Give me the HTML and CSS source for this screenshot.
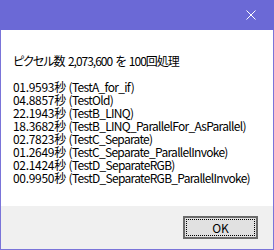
FILE: index.html
```html
<!DOCTYPE html>
<html lang="ja">
  <head>
    <meta charset="UTF-8" />
    <title>Result</title>
    <link rel="stylesheet" href="styles.css">
  </head>
  <body>
    <div class="dialog">
      <div class="titlebar">
        <button class="close-btn" type="button" aria-label="閉じる">
          <svg width="10" height="10" viewBox="0 0 10 10">
            <path d="M0.5 0.5 L9.5 9.5 M9.5 0.5 L0.5 9.5" stroke="#fff" stroke-width="1" fill="none" />
          </svg>
        </button>
      </div>

      <div class="message">
        <p class="summary">ピクセル数 2,073,600 を 100回処理</p>
        <ul class="results">
          <li><span class="time">01.9593秒</span> <span class="name">(TestA_for_if)</span></li>
          <li><span class="time">04.8857秒</span> <span class="name">(TestOld)</span></li>
          <li><span class="time">22.1943秒</span> <span class="name">(TestB_LINQ)</span></li>
          <li><span class="time">18.3682秒</span> <span class="name">(TestB_LINQ_ParallelFor_AsParallel)</span></li>
          <li><span class="time">02.7823秒</span> <span class="name">(TestC_Separate)</span></li>
          <li><span class="time">01.2649秒</span> <span class="name">(TestC_Separate_ParallelInvoke)</span></li>
          <li><span class="time">02.1424秒</span> <span class="name">(TestD_SeparateRGB)</span></li>
          <li><span class="time">00.9950秒</span> <span class="name">(TestD_SeparateRGB_ParallelInvoke)</span></li>
        </ul>
      </div>

      <div class="footer">
        <button class="ok-btn" type="button"><span>OK</span></button>
      </div>
    </div>
  </body>
</html>
```

FILE: styles.css
```css
html,
body {
  margin: 0;
  padding: 0;
}

body {
  font-family: "Noto Sans CJK JP", "Noto Sans", sans-serif;
  font-size: 12px;
  color: #000;
  background-color: #fff;
}

.dialog {
  width: 274px;
  height: 250px;
  box-sizing: border-box;
  border: 1px solid #7a74d9;
  border-top: none;
  display: flex;
  flex-direction: column;
}

.titlebar {
  height: 30px;
  background-color: #6b69d6;
  display: flex;
  justify-content: flex-end;
  margin: 0 -1px;
}

.close-btn {
  width: 46px;
  height: 30px;
  border: none;
  background: transparent;
  padding: 0;
  display: flex;
  align-items: center;
  justify-content: center;
}

.message {
  flex: 1;
  background-color: #fff;
  padding: 24px 11px 0 12px;
  line-height: 13px;
  white-space: nowrap;
  font-feature-settings: "palt";
}

.summary {
  margin: 0 0 13px;
  height: 13px;
  letter-spacing: -1px;
  word-spacing: 1.6px;
}

.results {
  list-style: none;
  margin: 0;
  padding: 0;
}

.results li {
  height: 13px;
}

.time,
.name {
  display: inline-block;
  height: 13px;
}

.time {
  letter-spacing: -0.3px;
}

.name {
  letter-spacing: -0.7px;
}

.footer {
  height: 43px;
  background-color: #f0f0f0;
  display: flex;
  justify-content: flex-end;
  align-items: flex-start;
  padding: 10px 15px 0 0;
  box-sizing: border-box;
}

.ok-btn {
  width: 75px;
  height: 23px;
  box-sizing: border-box;
  border: 2px solid #6b6b6b;
  background-color: #e1e1e1;
  padding: 1px;
  font-family: inherit;
  font-size: 12px;
  color: #000;
  display: flex;
}

.ok-btn span {
  flex: 1;
  border: 1px dotted #000;
  display: flex;
  align-items: center;
  justify-content: center;
  line-height: 1;
}
```
